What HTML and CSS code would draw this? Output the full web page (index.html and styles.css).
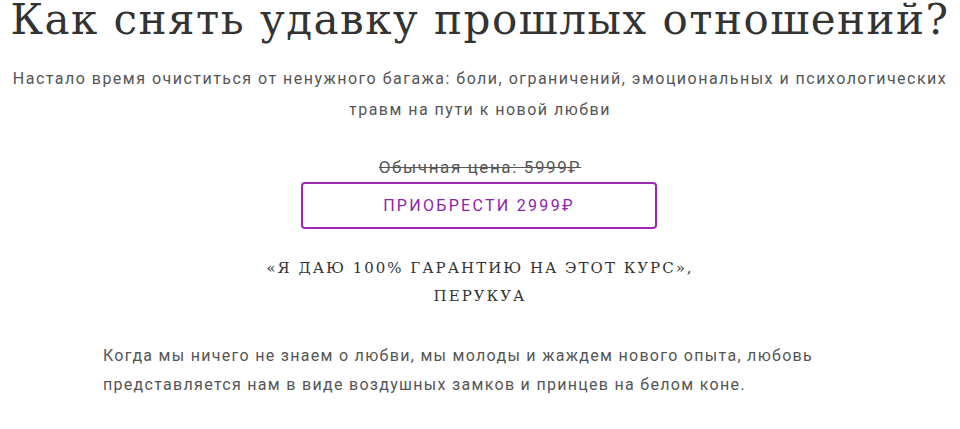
FILE: index.html
```html
<!DOCTYPE html>
<html lang="ru">
<head>
<meta charset="utf-8">
<link rel="stylesheet" href="styles.css">
</head>
<body>
<main class="page">
  <h1 class="title">Как снять удавку прошлых отношений?</h1>
  <p class="lead">Настало время очиститься от ненужного багажа: боли, ограничений, эмоциональных и психологических травм на пути к новой любви</p>
  <div class="offer">
    <div class="old-price">Обычная цена: 5999₽</div>
    <a class="buy" href="#">ПРИОБРЕСТИ 2999₽</a>
  </div>
  <p class="quote">«Я даю 100% гарантию на этот курс»,<br>Перукуа</p>
  <p class="text">Когда мы ничего не знаем о любви, мы молоды и жаждем нового опыта, любовь представляется нам в виде воздушных замков и принцев на белом коне.</p>
</main>
</body>
</html>
```
FILE: styles.css
```css
html, body {
  margin: 0;
  padding: 0;
  background: #fff;
}
.page {
  display: flex;
  flex-direction: column;
  align-items: center;
  font-family: Roboto, "Liberation Sans", sans-serif;
  color: #555;
}
.title {
  margin: -8px 0 0;
  font-family: "DejaVu Serif", "Liberation Serif", serif;
  font-weight: 400;
  font-size: 42px;
  line-height: 56px;
  letter-spacing: 1.5px;
  color: #333;
  white-space: nowrap;
}
.lead {
  margin: 15px 0 0;
  width: 952px;
  text-align: center;
  font-size: 16px;
  line-height: 31px;
  letter-spacing: 1.48px;
}
.offer {
  margin-top: 32px;
  display: flex;
  flex-direction: column;
  align-items: center;
  gap: 5px;
}
.old-price {
  font-size: 17px;
  line-height: 20px;
  letter-spacing: 1.6px;
  text-decoration: line-through;
  color: #555;
}
.buy {
  box-sizing: border-box;
  width: 356px;
  height: 47px;
  margin-left: -2px;
  display: flex;
  align-items: center;
  justify-content: center;
  border: 2px solid #9c27b0;
  border-radius: 4px;
  color: #8e24aa;
  text-decoration: none;
  font-size: 16px;
  letter-spacing: 2.3px;
}
.quote {
  margin: 25px 0 0;
  text-align: center;
  font-family: "DejaVu Serif", "Liberation Serif", serif;
  text-transform: uppercase;
  font-size: 15px;
  line-height: 28px;
  letter-spacing: 2px;
  color: #333;
}
.text {
  margin: 31px 0 0;
  width: 754px;
  font-size: 16px;
  line-height: 29px;
  letter-spacing: 1.3px;
}
```
